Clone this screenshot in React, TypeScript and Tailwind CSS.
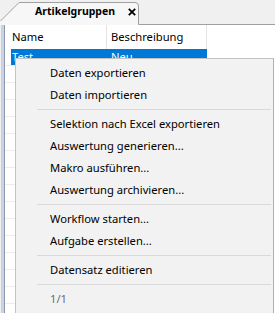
import React from "react";

type Item = { label?: string; sep?: boolean; disabled?: boolean };

const menuItems: Item[] = [
  { label: "Daten exportieren" },
  { label: "Daten importieren" },
  { sep: true },
  { label: "Selektion nach Excel exportieren" },
  { label: "Auswertung generieren..." },
  { label: "Makro ausführen..." },
  { label: "Auswertung archivieren..." },
  { sep: true },
  { label: "Workflow starten..." },
  { label: "Aufgabe erstellen..." },
  { sep: true },
  { label: "Datensatz editieren" },
  { sep: true },
  { label: "1/1", disabled: true },
];

const emptyRows = Array.from({ length: 15 });

function TabStrip() {
  return (
    <div className="relative h-[25px] shrink-0">
      <svg className="absolute inset-0" width="275" height="25" viewBox="0 0 275 25">
        <path d="M0.5 21 L19 2.5 H135 Q138.5 2.5 138.5 6 V25 H0.5 Z" fill="#f7f7f7" stroke="none" />
        <path d="M0.5 21 L19 2.5 H135 Q138.5 2.5 138.5 6 V24.5 H275" fill="none" stroke="#a0a0a0" />
      </svg>
      <div className="relative flex items-center h-[22px] pl-[35px] pt-[1px]">
        <span className="font-bold text-[10.5px] text-black">Artikelgruppen</span>
        <svg className="ml-[13px]" width="8" height="8" viewBox="0 0 8 8">
          <path d="M0.8 0.8 L7.2 7.2 M7.2 0.8 L0.8 7.2" stroke="#000" strokeWidth="1.8" />
        </svg>
      </div>
    </div>
  );
}

function Grid() {
  return (
    <div className="flex-1 flex bg-white min-h-0 overflow-hidden">
      <div className="w-[5px] flex shrink-0">
        <div className="w-[1px] bg-[#f0f0f0]" />
        <div className="w-[3px] bg-[#c9d1e2]" />
        <div className="w-[1px] bg-[#8e9ab0]" />
      </div>
      <div className="flex-1 flex flex-col">
        <div className="flex h-[24px] items-center shrink-0">
          <div className="w-[6px]" />
          <div className="w-[96px] h-full flex items-center pl-[1px] border-r border-[#e3e3e3]">Name</div>
          <div className="w-[100px] h-full flex items-center pl-[4px] border-r border-[#e3e3e3]">Beschreibung</div>
        </div>
        <div className="flex h-[17px] w-[202px] border-b border-[#ececec] shrink-0">
          <div className="w-[6px]" />
          <div className="flex-1 flex bg-[#0078d7] text-white items-center">
            <div className="w-[96px] pl-[1px]">Test</div>
            <div className="pl-[4px]">Neu</div>
          </div>
        </div>
        {emptyRows.map((_, i) => (
          <div key={i} className="h-[17px] w-[202px] border-b border-[#ececec] shrink-0" />
        ))}
      </div>
    </div>
  );
}

function ContextMenu() {
  return (
    <div className="absolute left-[15px] top-[58px] w-[259px] h-[256px] bg-[#f2f2f2] border border-[#c4c4c4] border-r-[#b0b0b0] pt-[3px]">
      {menuItems.map((it, i) =>
        it.sep ? (
          <div key={i} className="h-[7px] flex items-center pl-[21px] pr-[2px]">
            <div className="h-[1px] w-full bg-[#d9d9d9]" />
          </div>
        ) : (
          <div
            key={i}
            className={`h-[22px] flex items-center pl-[34px] ${it.disabled ? "text-[#6d6d6d]" : "text-black"}`}
          >
            {it.label}
          </div>
        )
      )}
    </div>
  );
}

export default function App() {
  return (
    <div
      className="relative w-[275px] h-[313px] bg-[#f0f0f0] flex flex-col overflow-hidden text-[11.2px] text-black"
      style={{ fontFamily: '"Noto Sans", "Liberation Sans", sans-serif' }}
    >
      <TabStrip />
      <Grid />
      <ContextMenu />
    </div>
  );
}
